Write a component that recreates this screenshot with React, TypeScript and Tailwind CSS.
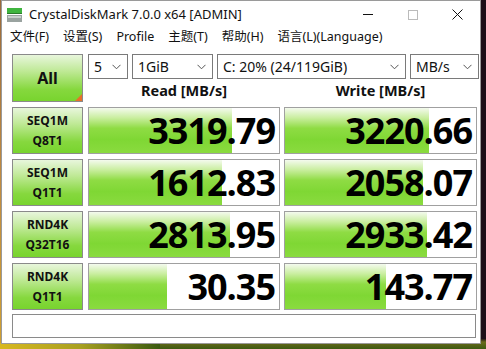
import React from "react";

const ui = { fontFamily: '"Noto Sans", "Noto Sans CJK SC", sans-serif' };
const num = { fontFamily: '"Open Sans", "Noto Sans", sans-serif' };

const rows = [
  { a: "SEQ1M", b: "Q8T1", r: "3319.79", w: "3220.66", rp: 143, wp: 144 },
  { a: "SEQ1M", b: "Q1T1", r: "1612.83", w: "2058.07", rp: 133, wp: 138 },
  { a: "RND4K", b: "Q32T16", r: "2813.95", w: "2933.42", rp: 141, wp: 142 },
  { a: "RND4K", b: "Q1T1", r: "30.35", w: "143.77", rp: 78, wp: 101 },
];

function Chevron() {
  return (
    <svg width="9" height="6" viewBox="0 0 9 6" className="shrink-0">
      <path d="M0.5 0.8 L4.5 4.8 L8.5 0.8" fill="none" stroke="#555" strokeWidth="1" />
    </svg>
  );
}

function Select({ w, label }: { w: string; label: string }) {
  return (
    <div className={`${w} h-[25px] border border-[#7a7a7a] bg-white flex items-center justify-between pl-[5px] pr-[6px] text-[14px] text-[#111]`}>
      <span className="leading-none">{label}</span>
      <Chevron />
    </div>
  );
}

function Bar({ value, px, w }: { value: string; px: number; w: string }) {
  return (
    <div className={`${w} h-[47px] border border-[#a0a0a0] bg-white relative overflow-hidden`}>
      <div
        className="absolute left-0 top-0 bottom-0 bg-[linear-gradient(to_bottom,#f4faee_0%,#c9ee9f_22%,#8fdc44_45%,#7fd734_70%,#8adb3f_100%)]"
        style={{ width: px }}
      />
      <div
        className="relative h-full flex items-center justify-end pr-[4px] text-[36px] font-bold text-black leading-none tracking-[-1px]"
        style={num}
      >
        {value}
      </div>
    </div>
  );
}

export default function App() {
  return (
    <div className="w-[486px] h-[349px] overflow-hidden bg-[linear-gradient(to_bottom,#1c0f18_0%,#1c0f18_97%,#6b6a1a_98%,#3d5a12_100%)] relative">
      <div className="absolute left-0 top-0 w-[2px] h-[349px] bg-[linear-gradient(to_bottom,#9a6a3a,#c08a40,#d0a030)]" />
      <div className="absolute left-0 bottom-0 w-[160px] h-[6px] bg-[linear-gradient(to_right,#d8b820,#a8a020,#3a5a10)]" />
      <div className="relative ml-[1px] w-[480px] h-[344px] bg-white border border-[#9a9a9a] flex flex-col" style={ui}>
        {/* title bar */}
        <div className="h-[27px] flex items-center shrink-0">
          <svg width="15" height="14" viewBox="0 0 15 14" className="ml-[5px] mr-[7px]">
            <rect x="0" y="0" width="15" height="5" fill="#3fb53f" />
            <rect x="0" y="5" width="15" height="1" fill="#2a7a2a" />
            <rect x="0" y="7" width="15" height="7" fill="#9aa3a0" />
            <rect x="1" y="8" width="13" height="2" fill="#c8d0cc" />
          </svg>
          <span className="text-[13px] text-[#111] leading-none">CrystalDiskMark 7.0.0 x64 [ADMIN]</span>
          <div className="ml-auto flex items-center h-full">
            <div className="w-[45px] h-full flex items-center justify-center">
              <div className="w-[10px] h-[1px] bg-[#111]" />
            </div>
            <div className="w-[45px] h-full flex items-center justify-center">
              <div className="w-[10px] h-[10px] border border-[#bbb]" />
            </div>
            <div className="w-[45px] h-full flex items-center justify-center">
              <svg width="11" height="11" viewBox="0 0 11 11">
                <path d="M0.5 0.5 L10.5 10.5 M10.5 0.5 L0.5 10.5" stroke="#111" strokeWidth="1" />
              </svg>
            </div>
          </div>
        </div>
        {/* menu bar */}
        <div className="h-[19px] flex items-center text-[12.5px] text-[#111] leading-none shrink-0 pl-[8px] gap-[14px]">
          <span>文件(F)</span>
          <span>设置(S)</span>
          <span>Profile</span>
          <span>主题(T)</span>
          <span>帮助(H)</span>
          <span>语言(L)(Language)</span>
        </div>
        {/* content */}
        <div className="pl-[10px] pt-[7px] flex flex-col">
          <div className="flex">
            <div className="relative w-[71px] h-[48px] border border-[#8a8a8a] bg-[linear-gradient(to_bottom,#e8f6dc_0%,#bfe996_35%,#86d83e_75%,#78d42e_100%)] flex items-center justify-center overflow-hidden">
              <span className="text-[16px] font-bold text-[#111]">All</span>
              <div className="absolute right-0 bottom-0 w-0 h-0 border-l-[7px] border-l-transparent border-b-[7px] border-b-[#e8702a]" />
            </div>
            <div className="ml-[5px] flex flex-col">
              <div className="flex gap-[4px]">
                <Select w="w-[40px]" label="5" />
                <Select w="w-[81px]" label="1GiB" />
                <Select w="w-[189px]" label="C: 20% (24/119GiB)" />
                <Select w="w-[69px]" label="MB/s" />
              </div>
              <div className="flex gap-[4px] h-[23px] items-center text-[14.5px] font-bold text-[#111]">
                <div className="w-[192px] text-center leading-none">Read [MB/s]</div>
                <div className="w-[193px] text-center leading-none">Write [MB/s]</div>
              </div>
            </div>
          </div>
          <div className="flex flex-col gap-[5px] mt-[5px]">
            {rows.map((r, i) => (
              <div key={i} className="flex">
                <div className="w-[71px] h-[47px] border border-[#8a8a8a] bg-[linear-gradient(to_bottom,#e8f6dc_0%,#bfe996_35%,#86d83e_75%,#78d42e_100%)] flex flex-col items-center justify-center text-[12px] font-bold text-[#111] leading-[20px]">
                  <span>{r.a}</span>
                  <span>{r.b}</span>
                </div>
                <div className="ml-[5px]">
                  <Bar value={r.r} px={r.rp} w="w-[192px]" />
                </div>
                <div className="ml-[4px]">
                  <Bar value={r.w} px={r.wp} w="w-[193px]" />
                </div>
              </div>
            ))}
          </div>
          <div className="mt-[4px] w-[464px] h-[24px] border border-[#8a8a8a] bg-white" />
        </div>
      </div>
    </div>
  );
}
